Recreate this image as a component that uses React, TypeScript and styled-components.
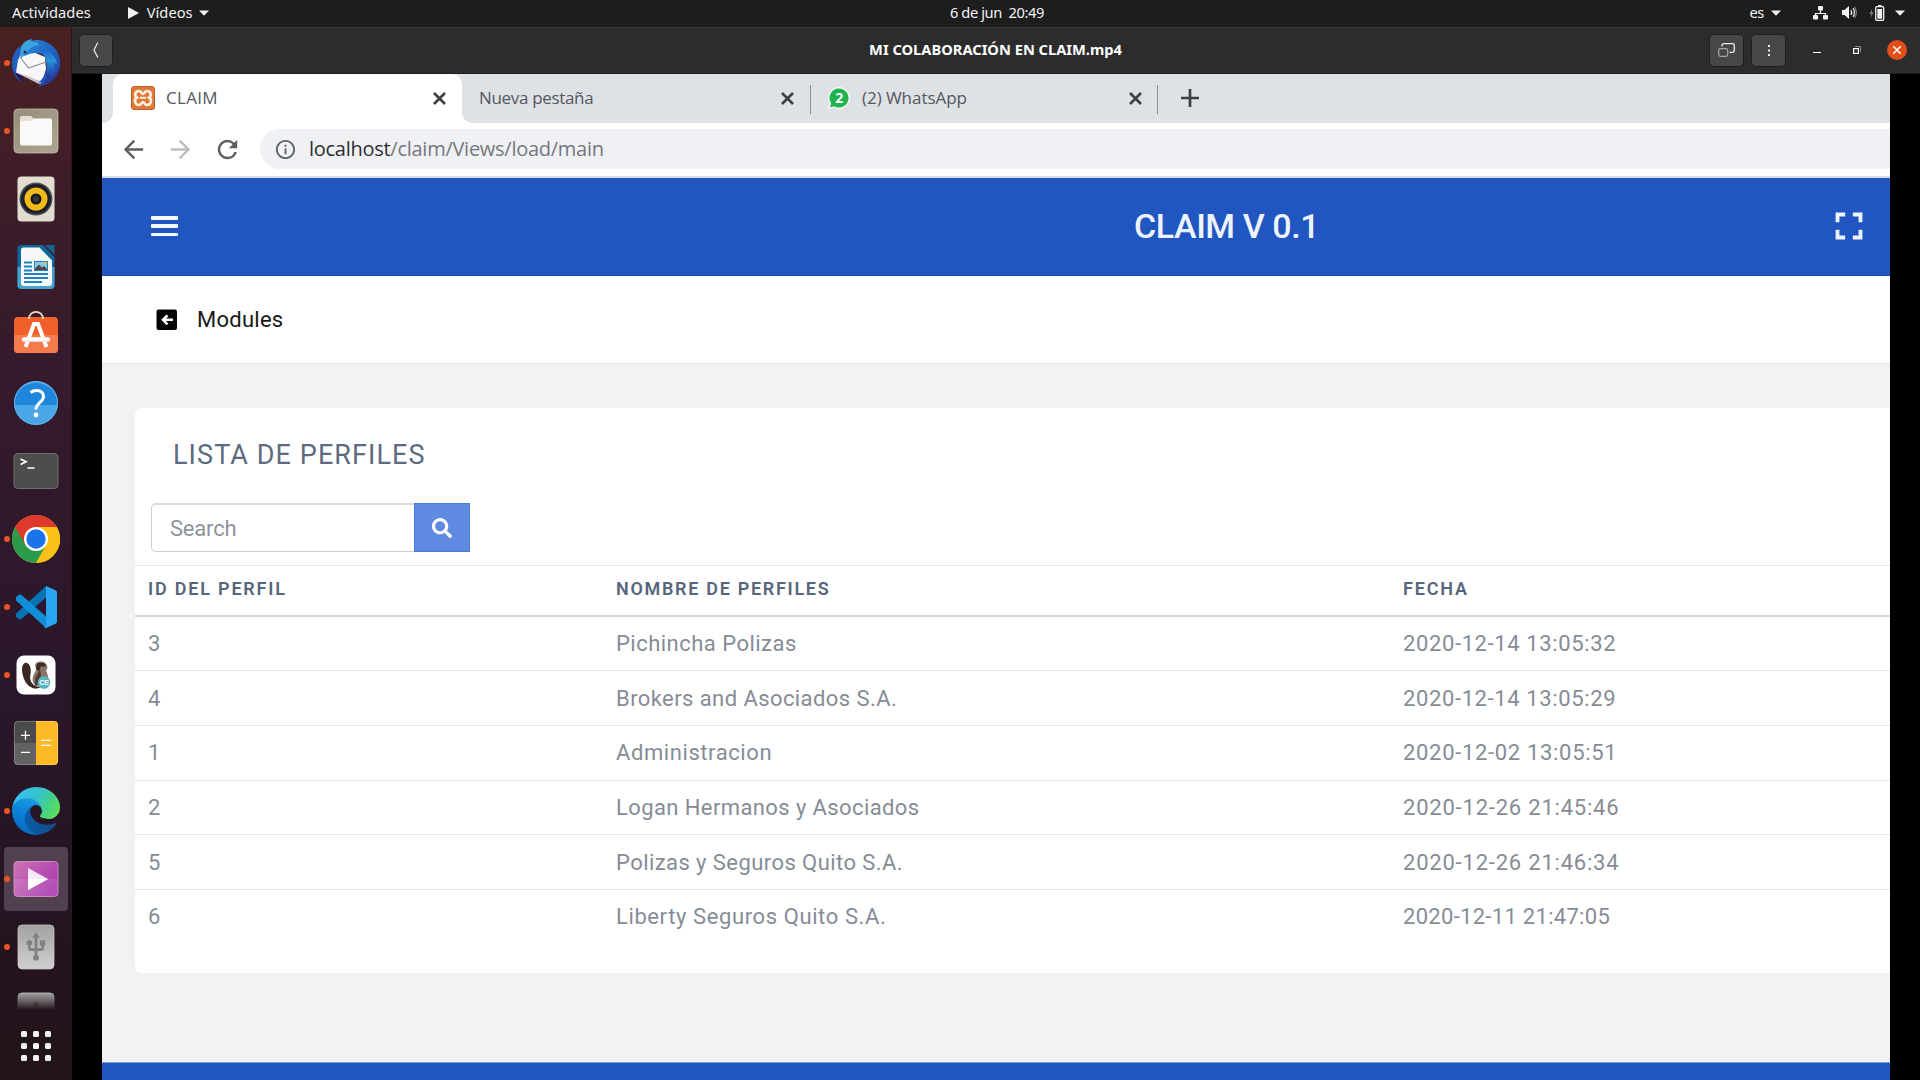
import React from "react";
import styled, { createGlobalStyle } from "styled-components";
import { MdArrowBack, MdArrowForward, MdFullscreen, MdInfoOutline, MdRefresh, MdUsb } from "react-icons/md";
import { FaSearch } from "react-icons/fa";

const GlobalStyle = createGlobalStyle`
  * { box-sizing: border-box; }
  body { margin: 0; background: #000; overflow: hidden; }
  svg { display: block; flex: none; }
`;

const uiFont = `"Noto Sans", "Open Sans", sans-serif`;
const tabFont = `"Open Sans", "Noto Sans", sans-serif`;
const pageFont = `Roboto, "Liberation Sans", sans-serif`;

const Desktop = styled.div`
  width: 1920px;
  height: 1080px;
  display: flex;
  flex-direction: column;
  background: #000;
  font-family: ${uiFont};
  white-space: pre;
`;

/* ---------- system bar ---------- */

const SystemBar = styled.header`
  height: 27px;
  flex: none;
  display: grid;
  grid-template-columns: 1fr auto 1fr;
  align-items: center;
  padding: 0 15px 2px 12px;
  background: #1d1d1d;
  color: #f2f2f2;
  font-size: 14.67px;
  line-height: 25px;
`;

const BarLeft = styled.div`
  display: flex;
  align-items: center;
`;

const BarLabel = styled.span<{ $tracking?: number; $left?: number; $right?: number }>`
  letter-spacing: ${(p) => p.$tracking ?? 0}px;
  margin-left: ${(p) => p.$left ?? 0}px;
  margin-right: ${(p) => p.$right ?? 0}px;
`;

const Clock = styled.time`
  padding-left: 77px;
  letter-spacing: -0.42px;
`;

const BarRight = styled.div`
  display: flex;
  align-items: center;
  justify-content: flex-end;
`;

const TrayIcon = styled.span<{ $left: number }>`
  margin-left: ${(p) => p.$left}px;
`;

const Caret = () => (
  <svg width="10" height="6" viewBox="0 0 10 6">
    <path d="M0 .4h10L5 5.8z" fill="#f2f2f2" />
  </svg>
);

/* ---------- workspace ---------- */

const Workspace = styled.div`
  flex: 1;
  min-height: 0;
  display: flex;
`;

const Dock = styled.nav`
  width: 72px;
  flex: none;
  display: flex;
  flex-direction: column;
  gap: 4px;
  padding: 4px 4px 0;
  overflow: hidden;
  background: linear-gradient(180deg, #4a2122 0%, #3f1d29 14%, #341a2c 34%, #2b172b 60%, #24131f 88%, #211419 100%);
  border-right: 1px solid #2a1420;
`;

const DockSlot = styled.div<{ $active?: boolean; $running?: boolean; $cut?: boolean }>`
  width: 64px;
  height: ${(p) => (p.$cut ? 27 : 64)}px;
  flex: none;
  position: relative;
  display: flex;
  justify-content: center;
  align-items: ${(p) => (p.$cut ? "flex-start" : "center")};
  padding-top: ${(p) => (p.$cut ? 8 : 0)}px;
  overflow: hidden;
  border-radius: 4px;
  background: ${(p) => (p.$active ? "#51414f" : "transparent")};
  ${(p) => p.$cut && "mask-image: linear-gradient(180deg, #000 35%, transparent 100%);"}

  &::before {
    content: "";
    display: ${(p) => (p.$running ? "block" : "none")};
    position: absolute;
    left: 0;
    top: 29px;
    width: 6px;
    height: 6px;
    border-radius: 50%;
    background: #e95420;
  }
`;

const AppGrid = styled.div`
  display: grid;
  grid-template-columns: repeat(3, 6px);
  grid-auto-rows: 6px;
  gap: 6px;
  justify-content: center;
  margin-top: 17px;
`;

const AppDot = styled.i`
  border-radius: 1.5px;
  background: #f4f2f3;
`;

/* ---------- player window ---------- */

const PlayerWindow = styled.main`
  flex: 1;
  min-width: 0;
  display: flex;
  flex-direction: column;
`;

const TitleBar = styled.div`
  height: 47px;
  flex: none;
  display: grid;
  grid-template-columns: 1fr auto 1fr;
  align-items: center;
  padding: 0 13px 1px 7px;
  background: #2c2c2c;
  border-top: 1px solid #3b3b3b;
  border-bottom: 1px solid #1f1f1f;
`;

const WindowTitle = styled.h1`
  margin: 0;
  padding: 0 0 2px 5px;
  font-size: 14.67px;
  line-height: 20px;
  font-weight: 700;
  color: #fff;
`;

const HeaderButton = styled.button<{ $width: number }>`
  width: ${(p) => p.$width}px;
  height: 33px;
  padding: 0;
  display: flex;
  align-items: center;
  justify-content: center;
  border: 1px solid #1f1f1f;
  border-radius: 5px;
  background: #474747;
`;

const WindowControls = styled.div`
  display: flex;
  align-items: center;
  justify-content: flex-end;
  gap: 7px;
`;

const ControlSlot = styled.span<{ $left: number }>`
  margin-left: ${(p) => p.$left}px;
`;

const VideoArea = styled.div`
  flex: 1;
  min-height: 0;
  display: flex;
  padding: 0 30px;
  background: #000;
`;

const Frame = styled.div`
  flex: 1;
  min-width: 0;
  display: flex;
  flex-direction: column;
  overflow: hidden;
  background: #f2f2f2;
`;

/* ---------- browser ---------- */

const TabStrip = styled.div`
  height: 49px;
  flex: none;
  display: flex;
  align-items: stretch;
  padding-left: 11px;
  background: #dee1e6;
  font-family: ${tabFont};
  font-size: 17px;
  color: #55585d;
`;

const Tab = styled.div<{ $width: number; $pad: number; $end: number; $active?: boolean }>`
  width: ${(p) => p.$width}px;
  flex: none;
  position: relative;
  display: flex;
  align-items: center;
  padding: 0 ${(p) => p.$end}px 1px ${(p) => p.$pad}px;
  border-radius: 10px 10px 0 0;
  background: ${(p) => (p.$active ? "#fff" : "transparent")};

  &::before,
  &::after {
    content: "";
    display: ${(p) => (p.$active ? "block" : "none")};
    position: absolute;
    bottom: 0;
    width: 10px;
    height: 10px;
  }
  &::before {
    right: 100%;
    background: radial-gradient(circle at 0 0, transparent 9.5px, #fff 10px);
  }
  &::after {
    left: 100%;
    background: radial-gradient(circle at 100% 0, transparent 9.5px, #fff 10px);
  }
`;

const TabLabel = styled.span<{ $gap: number; $tracking: number }>`
  flex: 1;
  margin-left: ${(p) => p.$gap}px;
  padding-bottom: 2px;
  letter-spacing: ${(p) => p.$tracking}px;
`;

const TabDivider = styled.i`
  width: 1px;
  height: 29px;
  flex: none;
  margin-top: 11px;
  background: #8a8d91;
`;

const NewTab = styled.span`
  display: flex;
  align-items: center;
  margin-left: 23px;
  padding-bottom: 1px;
`;

const AddressRow = styled.div`
  height: 55px;
  flex: none;
  display: flex;
  align-items: flex-start;
  padding: 6px 0 0 17px;
  background: #fff;
  border-bottom: 2px solid #dcdfe8;
`;

const NavIcon = styled.span<{ $right: number; $faint?: boolean }>`
  height: 41px;
  display: flex;
  align-items: center;
  margin-right: ${(p) => p.$right}px;
  color: ${(p) => (p.$faint ? "#bbbdc0" : "#5b5e63")};
`;

const Omnibox = styled.div`
  flex: 1;
  height: 40px;
  display: flex;
  align-items: center;
  gap: 12px;
  padding: 0 0 0 14px;
  border-radius: 20px 0 0 20px;
  background: #f0f1f5;
  color: #5f6368;
`;

const Address = styled.span`
  padding-bottom: 1px;
  font-family: ${tabFont};
  font-size: 20px;
  letter-spacing: -0.27px;
  color: #75787c;
`;

const Host = styled.b`
  font-weight: 400;
  color: #2c2e31;
`;

/* ---------- claim page ---------- */

const AppHeader = styled.div`
  height: 98px;
  flex: none;
  display: flex;
  align-items: center;
  padding: 0 18px 1px 49px;
  background: #2156c1;
  border-bottom: 1px solid #1d48a6;
  color: #eef4ff;
`;

const AppTitle = styled.h2`
  margin: 0 auto 0 956px;
  font: 500 34px/40px ${pageFont};
  letter-spacing: -0.42px;
`;

const MenuBars = styled.div`
  width: 27px;
  height: 20px;
  flex: none;
  display: flex;
  flex-direction: column;
  justify-content: space-between;
`;

const MenuBar = styled.i`
  height: 3.5px;
  border-radius: 1px;
  background: #f4f8ff;
`;

const Breadcrumb = styled.div`
  height: 88px;
  flex: none;
  display: flex;
  align-items: center;
  gap: 19px;
  padding: 0 0 0 54px;
  background: #fff;
  border-bottom: 1px solid #e6e8ea;
  font: 400 22px/30px ${pageFont};
  letter-spacing: 0.25px;
  color: #181818;
`;

const PageBody = styled.div`
  flex: 1;
  padding: 44px 0 0 33px;
`;

const Card = styled.section`
  height: 565px;
  display: flex;
  flex-direction: column;
  border-radius: 6px 0 0 6px;
  background: #fff;
  font-family: ${pageFont};
`;

const CardTitle = styled.h3`
  margin: 0;
  padding: 31px 0 0 38px;
  font-weight: 400;
  font-size: 27px;
  line-height: 32px;
  letter-spacing: 1.08px;
  color: #5d6b80;
`;

const SearchGroup = styled.div`
  display: flex;
  height: 49px;
  margin: 32px 0 13px 16px;
`;

const SearchField = styled.div`
  width: 263px;
  display: flex;
  align-items: center;
  padding-left: 18px;
  border: 1px solid #ccced1;
  border-top-width: 2px;
  border-top-color: #dadbdd;
  border-right: 0;
  border-radius: 5px 0 0 5px;
  font-size: 22px;
  letter-spacing: -0.2px;
  color: #8e949c;
`;

const SearchButton = styled.button`
  width: 56px;
  padding: 0;
  display: flex;
  align-items: center;
  justify-content: center;
  border: 1px solid #4b7ad8;
  background: #5e8ae2;
  color: #fff;
`;

const Row = styled.div<{ $head?: boolean; $first?: boolean }>`
  height: ${(p) => (p.$head ? 49.5 : p.$first ? 55.7 : 54.7)}px;
  flex: none;
  display: grid;
  grid-template-columns: 468px 787px 1fr;
  align-items: center;
  padding: 0 0 ${(p) => (p.$head ? 3 : 0)}px 13px;
  border-top: ${(p) => (p.$first ? "2px solid #d6d9dc" : "1px solid #e4e6e9")};
  font-size: ${(p) => (p.$head ? 18 : 22)}px;
  font-weight: ${(p) => (p.$head ? 600 : 400)};
  color: ${(p) => (p.$head ? "#56667c" : "#868c96")};
`;

const Cell = styled.span<{ $tracking?: number }>`
  letter-spacing: ${(p) => p.$tracking ?? 0}px;
`;

const Footer = styled.div`
  height: 18px;
  flex: none;
  background: #2156c1;
  border-top: 1px solid #7d9dda;
`;

/* ---------- drawings ---------- */

const Ico = ({ children }: { children: React.ReactNode }) => (
  <svg width="48" height="48" viewBox="0 0 48 48">{children}</svg>
);

const Thunderbird = () => (
  <Ico>
    <defs>
      <linearGradient id="tbBody" x1="0" y1="0" x2="1" y2="1">
        <stop offset="0" stopColor="#2f8fe0" /><stop offset=".5" stopColor="#1d63c4" /><stop offset="1" stopColor="#2b3fa5" />
      </linearGradient>
      <linearGradient id="tbWing" x1="0" y1="0" x2="0" y2="1">
        <stop offset="0" stopColor="#1f66c6" /><stop offset=".45" stopColor="#2b93dc" /><stop offset="1" stopColor="#1c3f9e" />
      </linearGradient>
    </defs>
    <path d="M8 7C1 13-1 21 .5 29c1 6 4 11 10 14.500L8 34z" fill="#1f5fc0" />
    <path d="M3 33c2 5 5 9 9 10.500l-3-8z" fill="#241457" />
    <path d="M9 15 20 12.500 33 18l1 12-4 13.500-1.500 1L4 33.500 6 21z" fill="#f7f7fa" />
    <path d="M4 33.500l9 2.500 15 6 1 2.500-2 .500z" fill="#c9c5ce" />
    <path d="M8 18l8.500 11L34 23" fill="none" stroke="#8c8c96" strokeWidth="1.100" />
    <path d="M9 7C15 1 25-.500 33 2.500c10 4 15 12 15 21.500 0 12-9 22-22 23.500 2-1.500 3-3 3-4.500l-3 1c5-4 8-9 8.500-15 .500-7-1-12-5-14-5-2-11-1-14.500 1L9 18z" fill="url(#tbBody)" />
    <path d="M34.500 31c1 6-1 12-6 16 10-2 17-8 19-18-3 5-6 7-9 8z" fill="#283c9e" />
    <path d="M30 9c9 3 14 9 15 16l-3-1 .500 8-4-2-1 7.500-3.500-1c2-7 1-14-1-18-1-4-2-7-3-9.500z" fill="url(#tbWing)" />
    <path d="M10 6.500c2-4 6-6.500 10.500-6l-2.500 2c5-.500 8 1 9 4-4-.500-7 1-10 4l-8 9c-1-5-1.500-9 1-13z" fill="#3aa3df" />
    <circle cx="13" cy="13" r="1.500" fill="#0e2c5c" />
  </Ico>
);

const Files = () => (
  <Ico>
    <defs>
      <linearGradient id="filesBg" x1="0" y1="0" x2="1" y2="1">
        <stop offset="0" stopColor="#958d79" /><stop offset="1" stopColor="#aea692" />
      </linearGradient>
    </defs>
    <rect x="2" y="2" width="44" height="44" rx="4" fill="url(#filesBg)" stroke="#c3bdac" strokeWidth=".8" />
    <path d="M8 13V11q0-2 2-2h8q2 0 3 2l1.500 2H38v8H8z" fill="#e5e0d3" />
    <path d="M8 16q0-2 2-2h9l3-2.500h16q2 0 2 2V36q0 2.500-2.500 2.500h-27Q8 38.500 8 36z" fill="#faf9f8" />
  </Ico>
);

const Rhythmbox = () => (
  <Ico>
    <rect x="5.500" y="1.500" width="37" height="45" rx="4" fill="#e2ddd1" />
    <circle cx="24" cy="24" r="16.500" fill="#4b5058" />
    <circle cx="24" cy="24" r="15" fill="#1d1e2b" />
    <circle cx="24" cy="24" r="11.500" fill="#f0bb16" />
    <circle cx="24" cy="24" r="5.500" fill="#16171c" />
    <circle cx="24" cy="24" r="3" fill="#34363c" />
  </Ico>
);

const Writer = () => (
  <Ico>
    <path d="M9.500 2H31l11.500 12v28q0 4-4 4h-29q-4 0-4-4V6q0-4 4-4z" fill="#0d6899" />
    <path d="M5.500 24h37v18q0 4-4 4h-29q-4 0-4-4z" fill="#47a2cf" />
    <path d="M33 2h9.500v10z" fill="#10648f" />
    <path d="M11 4.500h16.500L40 17.500V40q0 3-3 3H12q-3 0-3-3V7q0-2.500 2-2.500z" fill="#f8f8f8" />
    <path d="M12 19.500h8M12 23.500h8M12 27.500h8M12 31h24M12 35h24M12 39h18" stroke="#1c82bd" strokeWidth="1.800" />
    <rect x="22.500" y="18.500" width="13" height="9" fill="#8cc8ea" stroke="#1c82bd" strokeWidth="1" />
    <path d="M23 27v-1.500l4-4 3 3 2-1.500 3 3v1z" fill="#4a4a4a" />
    <path d="M32 19h3v3z" fill="#fdbc2c" />
  </Ico>
);

const Software = () => (
  <Ico>
    <rect x="2" y="6" width="44" height="36" rx="4" fill="#f15f2a" />
    <path d="M2 24h44v14q0 4-4 4H6q-4 0-4-4z" fill="#f47b4b" />
    <path d="M17 8C17-1.500 31-1.500 31 8" fill="none" stroke="#f5dcb4" strokeWidth="1.700" />
    <path d="M13.500 36 22 13h4l8.500 23" fill="none" stroke="#fff" strokeWidth="4" />
    <path d="M12 28.500h24" stroke="#fff" strokeWidth="4.500" strokeLinecap="round" />
    <path d="M12.500 30h9M26.500 30h9" stroke="#fbd3c1" strokeWidth="1" />
  </Ico>
);

const Help = () => (
  <Ico>
    <circle cx="24" cy="24" r="22" fill="#4aa6e7" />
    <path d="M2 26a22 22 0 1 1 44 0z" fill="#1e87dc" />
    <circle cx="24" cy="24" r="21.500" fill="none" stroke="#6cb8ec" strokeWidth=".8" />
    <path d="M18.500 13.500q2.500-2 6-2c4.500 0 7 2.500 7 6 0 5.500-7.500 6.500-7.500 13" fill="none" stroke="#fff" strokeWidth="3" />
    <circle cx="24" cy="36" r="2.400" fill="#fff" />
  </Ico>
);

const Terminal = () => (
  <Ico>
    <rect x="2" y="6.500" width="44" height="35" rx="3.500" fill="#4d4d4d" stroke="#6e6e6e" strokeWidth="1" />
    <path d="M8.500 12l5.500 2.700-5.500 2.700M15.500 21h7" fill="none" stroke="#fff" strokeWidth="1.700" />
  </Ico>
);

const Chrome = () => (
  <Ico>
    <circle cx="24" cy="24" r="24" fill="#fbc116" />
    <path d="M24 24 3.200 12A24 24 0 0 0 24 48l10.400-18z" fill="#2c9a4b" />
    <path d="M3.200 12a24 24 0 0 1 41.600 0H24z" fill="#df382c" />
    <path d="M3.200 12 13.600 30 24 12z" fill="#df382c" />
    <path d="M24 12h20.800A24 24 0 0 1 24 48l10.400-18z" fill="#fbc116" />
    <circle cx="24" cy="24" r="12" fill="#fff" />
    <circle cx="24" cy="24" r="9.700" fill="#1a73e8" />
  </Ico>
);

const VSCode = () => (
  <Ico>
    <path d="M34 3 4 30.500v3.500l3.500 2.500q1 .500 2-.500L34 14.500z" fill="#0672b4" />
    <path d="M34 45 4 17.500V14l3.500-2.500q1-.500 2 .500L34 33.500z" fill="#108fd8" />
    <path d="M34 3l9.500 4.300Q45 8 45 9.500v29q0 1.500-1.500 2.200L34 45q-1 .400-1.500-.500L34 42z" fill="#28a6f3" />
  </Ico>
);

const DBeaver = () => (
  <Ico>
    <rect x="4.500" y="4.500" width="39" height="39" rx="7.500" fill="#fff" />
    <path d="M13 12c-3 1-3.500 6-2.500 11 1.500 7 5 12 10 14 3 1 6 .500 8-1-5 0-9-3-10-7s1-7 0-12c-.700-3.500-3-6-5.500-5z" fill="#3a2822" />
    <path d="M23 14c1-3 4-4 7-3.500 3 .500 4 2 5 4 .800 2 .500 4-1 4.500l2 6c1 4-1 8-4 10-3 1-7 1-9-1-3-3-3-7-1-11 1-2 2-3 2-5z" fill="#8a7467" />
    <path d="M25 13c3-2 7-1.500 9 1l-2 2-3-1-2 5-3-2z" fill="#3a2822" />
    <path d="M28 18l1 6-2 7-3 4c-2-3-1-8 1-11z" fill="#4d3930" />
    <circle cx="32" cy="31.500" r="6.300" fill="#58b5bf" />
    <text x="32" y="34" textAnchor="middle" fontFamily="Liberation Sans, sans-serif" fontSize="7" fontWeight="700" fill="#fff">CE</text>
  </Ico>
);

const Calculator = () => (
  <Ico>
    <path d="M24 2v44H6q-4 0-4-4V6q0-4 4-4z" fill="#4b4b4b" />
    <path d="M24 24v22H6q-4 0-4-4V24z" fill="#626262" />
    <path d="M24 2v44h18q4 0 4-4V6q0-4-4-4z" fill="#fdba24" />
    <rect x="2.400" y="2.400" width="43.200" height="43.200" rx="4" fill="none" stroke="#fff" strokeOpacity=".3" strokeWidth=".8" />
    <path d="M9 16.300h9M13.500 11.800v9M9 33.300h9M29 21.300h10M29 26.300h10" stroke="#fff" strokeWidth="1.300" />
  </Ico>
);

const Edge = () => (
  <svg width="48" height="48" viewBox="0 0 256 256">
    <defs>
      <linearGradient id="edDark" x1=".2" y1=".5" x2="1" y2=".5">
        <stop offset="0" stopColor="#0c59a4" /><stop offset="1" stopColor="#114a8b" />
      </linearGradient>
      <linearGradient id="edBlue" x1=".6" y1="0" x2=".3" y2="1">
        <stop offset="0" stopColor="#1b9de2" /><stop offset=".5" stopColor="#0a7fd8" /><stop offset="1" stopColor="#0667be" />
      </linearGradient>
      <linearGradient id="edGreen" x1="0" y1=".3" x2="1" y2=".7">
        <stop offset="0" stopColor="#35c1f1" /><stop offset=".45" stopColor="#35c3cf" /><stop offset=".75" stopColor="#45d182" /><stop offset="1" stopColor="#5fe05b" />
      </linearGradient>
    </defs>
    <path fill="url(#edDark)" d="M231 190.500c-3.400 1.800-6.900 3.400-10.500 4.700a101 101 0 0 1-35.600 6.400c-46.900 0-87.700-32.300-87.700-73.600.1-11.300 6.300-21.600 16.100-27.200C70.900 102.600 60 146.700 60 172.600c0 73 67.300 80.500 81.800 80.500 7.800 0 19.600-2.300 26.700-4.500l1.300-.4a128 128 0 0 0 66.500-52.700 4 4 0 0 0-5.300-5z" />
    <path fill="url(#edBlue)" d="M105.700 241.500a79.200 79.200 0 0 1-22.700-21.300 80.700 80.700 0 0 1 29.500-120c3.100-1.500 8.500-4.100 15.600-4 10.100.1 19.600 4.900 25.700 13 4 5.400 6.300 11.900 6.400 18.700 0-.2 24.500-79.600-80-79.600-43.900 0-80 41.600-80 78.200a130 130 0 0 0 12.100 56 128 128 0 0 0 156.400 67.100 75.500 75.500 0 0 1-62.800-8z" />
    <path fill="url(#edGreen)" d="M152.300 148.900c-.8 1-3.300 2.500-3.300 5.700 0 2.600 1.700 5.200 4.800 7.300 14.400 10.100 41.600 8.700 41.700 8.700 10.700 0 21.200-2.900 30.300-8.300A61.400 61.400 0 0 0 256 109.400c.3-22.400-8-37.300-11.300-43.900C223.500 23.900 177.700 0 128 0A128 128 0 0 0 0 126.200c.5-36.500 36.800-66 80-66 3.500 0 23.500.3 42 10.100a72.600 72.600 0 0 1 30.900 29.300c6.100 10.600 7.200 24.100 7.200 29.500s-2.700 13.300-7.800 19.900z" />
  </svg>
);

const Videos = () => (
  <Ico>
    <defs>
      <linearGradient id="vidBg" x1="0" y1="0" x2="1" y2=".6">
        <stop offset="0" stopColor="#cd74b8" /><stop offset="1" stopColor="#ab3cae" />
      </linearGradient>
    </defs>
    <rect x="2" y="6.500" width="44" height="35" rx="3.500" fill="url(#vidBg)" stroke="#de9bd0" strokeWidth=".8" />
    <path d="M2.400 24h43.200v14q0 3-3 3H5.400q-3 0-3-3z" fill="#fff" fillOpacity=".1" />
    <path d="M16 13v22l20-11z" fill="#f7e8f5" />
    <path d="M16 24v11l20-11z" fill="#fff" />
  </Ico>
);

const UsbDrive = () => (
  <Ico>
    <defs>
      <linearGradient id="usbBg" x1="0" y1="0" x2="0" y2="1">
        <stop offset="0" stopColor="#a2a2a2" /><stop offset="1" stopColor="#d0d0d0" />
      </linearGradient>
    </defs>
    <rect x="6" y="2" width="36" height="44" rx="4" fill="url(#usbBg)" stroke="#c4c4c4" strokeWidth=".8" />
    <MdUsb x={8} y={8} size={32} color="#818181" />
  </Ico>
);

const TabClose = () => (
  <svg width="13" height="13" viewBox="0 0 13 13">
    <path d="M1 1l11 11M12 1 1 12" stroke="#3c4043" strokeWidth="2.600" />
  </svg>
);

const ClaimFavicon = () => (
  <svg width="24" height="24" viewBox="0 0 24 24">
    <rect x=".5" y=".5" width="23" height="23" rx="2.500" fill="#e07a39" stroke="#bd5f27" />
    <path d="M8 5c-4 0-5 4.500-2 6.500-3.500 2-2 7.500 2 7.500 2.500 0 2.500-3 4-3s1.500 3 4 3c4 0 5.500-5.500 2-7.500C21 9.500 20 5 16 5c-2.500 0-2.500 3-4 3s-1.500-3-4-3z" fill="none" stroke="#fff2e4" strokeWidth="2.600" />
    <path d="M9 11.800h6" stroke="#fff2e4" strokeWidth="2" />
  </svg>
);

const WhatsAppFavicon = () => (
  <svg width="24" height="24" viewBox="0 0 24 24">
    <path d="M12 1a11 11 0 1 1-5 20.800L.800 23l1.700-5.500A11 11 0 0 1 12 1z" fill="#effaf1" />
    <path d="M12 2.500a9.500 9.500 0 1 1-4.800 17.700L3 21.300l1.200-4A9.500 9.500 0 0 1 12 2.500z" fill="#20b24c" />
    <text x="12.300" y="17.200" textAnchor="middle" fontFamily="Open Sans, sans-serif" fontSize="14" fontWeight="700" fill="#fff">2</text>
  </svg>
);

const BackSquare = () => (
  <svg width="22" height="22" viewBox="0 0 22 22">
    <rect x=".5" y=".5" width="20.500" height="20.500" rx="2" fill="#050505" />
    <path d="M17 10.800H7.500M11.500 6.300l-4.500 4.500 4.500 4.500" fill="none" stroke="#fff" strokeWidth="2.600" />
  </svg>
);

const dockItems: { icon: React.ReactNode; running?: boolean; active?: boolean; cut?: boolean }[] = [
  { icon: <Thunderbird />, running: true },
  { icon: <Files />, running: true },
  { icon: <Rhythmbox /> },
  { icon: <Writer /> },
  { icon: <Software /> },
  { icon: <Help /> },
  { icon: <Terminal /> },
  { icon: <Chrome />, running: true },
  { icon: <VSCode />, running: true },
  { icon: <DBeaver />, running: true },
  { icon: <Calculator /> },
  { icon: <Edge />, running: true },
  { icon: <Videos />, running: true, active: true },
  { icon: <UsbDrive />, running: true },
  { icon: <UsbDrive />, cut: true },
];

const profiles = [
  { id: 3, name: "Pichincha Polizas", track: 0.48, date: "2020-12-14 13:05:32", dateTrack: 0.62 },
  { id: 4, name: "Brokers and Asociados S.A.", track: 0.42, date: "2020-12-14 13:05:29", dateTrack: 0.62 },
  { id: 1, name: "Administracion", track: 0.58, date: "2020-12-02 13:05:51", dateTrack: 0.68 },
  { id: 2, name: "Logan Hermanos y Asociados", track: 0.4, date: "2020-12-26 21:45:46", dateTrack: 0.79 },
  { id: 5, name: "Polizas y Seguros Quito S.A.", track: 0.43, date: "2020-12-26 21:46:34", dateTrack: 0.79 },
  { id: 6, name: "Liberty Seguros Quito S.A.", track: 0.6, date: "2020-12-11 21:47:05", dateTrack: 0.3 },
];

export default function App() {
  return (
    <Desktop>
      <GlobalStyle />
      <SystemBar>
        <BarLeft>
          <BarLabel $tracking={0.05} $right={37}>Actividades</BarLabel>
          <svg width="11" height="12" viewBox="0 0 11 12"><path d="M0 0v12l11-6z" fill="#f2f2f2" /></svg>
          <BarLabel $left={8} $right={6}>Vídeos</BarLabel>
          <Caret />
        </BarLeft>
        <Clock>6 de jun  20:49</Clock>
        <BarRight>
          <BarLabel $tracking={-0.4} $right={7}>es</BarLabel>
          <Caret />
          <TrayIcon $left={32}>
            <svg width="15" height="14" viewBox="0 0 15 14">
              <path d="M7.500 4v4M2.500 10V7.500h10V10" fill="none" stroke="#f2f2f2" strokeWidth="1.200" />
              <rect x="5" y="0" width="5" height="4.500" rx="1" fill="#f2f2f2" />
              <rect x="0" y="9" width="5" height="4.500" rx="1" fill="#f2f2f2" />
              <rect x="10" y="9" width="5" height="4.500" rx="1" fill="#f2f2f2" />
            </svg>
          </TrayIcon>
          <TrayIcon $left={14}>
            <svg width="15" height="13" viewBox="0 0 15 13">
              <path d="M0 4h2.500L7 0v13L2.500 9H0z" fill="#f2f2f2" />
              <path d="M9 4q1.500 2.500 0 5M11 2.200q3 4.300 0 8.600" fill="none" stroke="#f2f2f2" strokeWidth="1.200" />
              <path d="M12.800 1q3 5.500 0 11" fill="none" stroke="#8b8b8b" strokeWidth="1.100" />
            </svg>
          </TrayIcon>
          <TrayIcon $left={12}>
            <svg width="16" height="16" viewBox="0 0 16 16">
              <path d="M3.500 3 .500 9h2L1.500 13 4.500 7.500h-2z" fill="#8b8b8b" />
              <rect x="6.700" y="1.700" width="8" height="13.600" rx="1" fill="none" stroke="#f2f2f2" strokeWidth="1.300" />
              <path d="M9 0h3.500v2H9zM8.300 4h4.800v9.800H8.300z" fill="#f2f2f2" />
            </svg>
          </TrayIcon>
          <TrayIcon $left={10}><Caret /></TrayIcon>
        </BarRight>
      </SystemBar>

      <Workspace>
        <Dock>
          {dockItems.map((item, i) => (
            <DockSlot key={i} $running={item.running} $active={item.active} $cut={item.cut}>{item.icon}</DockSlot>
          ))}
          <AppGrid>{Array.from({ length: 9 }, (_, i) => <AppDot key={i} />)}</AppGrid>
        </Dock>

        <PlayerWindow>
          <TitleBar>
            <HeaderButton $width={34}>
              <svg width="6" height="16" viewBox="0 0 6 16"><path d="M4.800.500 1 8l3.800 7.500" fill="none" stroke="#eee" strokeWidth="1.200" /></svg>
            </HeaderButton>
            <WindowTitle>MI COLABORACIÓN EN CLAIM.mp4</WindowTitle>
            <WindowControls>
              <HeaderButton $width={35}>
                <svg width="17" height="14" viewBox="0 0 17 14">
                  <path d="M4 3.500V2.500q0-1.800 1.800-1.800h8.700q1.800 0 1.800 1.800v5q0 1.800-1.800 1.800H11.500" fill="none" stroke="#eee" strokeWidth="1.300" />
                  <rect x=".700" y="5.700" width="9" height="7.600" rx="1.800" fill="none" stroke="#a5a5a5" strokeWidth="1.200" />
                </svg>
              </HeaderButton>
              <HeaderButton $width={35}>
                <svg width="2" height="11" viewBox="0 0 2 11"><path d="M0 0h2v2H0zM0 4.500h2v2H0zM0 9h2v2H0z" fill="#eee" /></svg>
              </HeaderButton>
              <ControlSlot $left={20}>
                <svg width="8" height="5" viewBox="0 0 8 5"><path d="M0 4.500h8" stroke="#fff" strokeWidth="1" /></svg>
              </ControlSlot>
              <ControlSlot $left={25}>
                <svg width="8" height="8" viewBox="0 0 8 8">
                  <path d="M2 .500h5.500V6" fill="none" stroke="#8d8d8d" />
                  <rect x=".600" y="2.600" width="4.800" height="4.800" fill="none" stroke="#fff" strokeWidth="1.200" />
                </svg>
              </ControlSlot>
              <ControlSlot $left={19}>
                <svg width="20" height="20" viewBox="0 0 20 20">
                  <circle cx="10" cy="10" r="10" fill="#e04e1a" />
                  <path d="M6.300 6.300l7.400 7.400M13.700 6.300l-7.400 7.400" stroke="#fff" strokeWidth="1.500" />
                </svg>
              </ControlSlot>
            </WindowControls>
          </TitleBar>

          <VideoArea>
            <Frame>
              <TabStrip>
                <Tab $width={349} $pad={18} $end={16} $active>
                  <ClaimFavicon />
                  <TabLabel $gap={11} $tracking={0.3}>CLAIM</TabLabel>
                  <TabClose />
                </Tab>
                <Tab $width={348} $pad={17} $end={16}>
                  <TabLabel $gap={0} $tracking={-0.33}>Nueva pestaña</TabLabel>
                  <TabClose />
                </Tab>
                <TabDivider />
                <Tab $width={346} $pad={16} $end={15}>
                  <WhatsAppFavicon />
                  <TabLabel $gap={11} $tracking={-0.05}>(2) WhatsApp</TabLabel>
                  <TabClose />
                </Tab>
                <TabDivider />
                <NewTab>
                  <svg width="18" height="18" viewBox="0 0 18 18"><path d="M9 0v18M0 9h18" stroke="#3c4043" strokeWidth="2.700" /></svg>
                </NewTab>
              </TabStrip>
              <AddressRow>
                <NavIcon $right={18}><MdArrowBack size={29} /></NavIcon>
                <NavIcon $right={18} $faint><MdArrowForward size={29} /></NavIcon>
                <NavIcon $right={18}><MdRefresh size={29} /></NavIcon>
                <Omnibox>
                  <MdInfoOutline size={23} />
                  <Address><Host>localhost</Host>/claim/Views/load/main</Address>
                </Omnibox>
              </AddressRow>

              <AppHeader>
                <MenuBars><MenuBar /><MenuBar /><MenuBar /></MenuBars>
                <AppTitle>CLAIM V 0.1</AppTitle>
                <MdFullscreen size={46} />
              </AppHeader>
              <Breadcrumb>
                <BackSquare />
                Modules
              </Breadcrumb>
              <PageBody>
                <Card>
                  <CardTitle>LISTA DE PERFILES</CardTitle>
                  <SearchGroup>
                    <SearchField>Search</SearchField>
                    <SearchButton><FaSearch size={20} /></SearchButton>
                  </SearchGroup>
                  <Row $head>
                    <Cell $tracking={1.8}>ID DEL PERFIL</Cell>
                    <Cell $tracking={1.7}>NOMBRE DE PERFILES</Cell>
                    <Cell $tracking={1.85}>FECHA</Cell>
                  </Row>
                  {profiles.map((p, i) => (
                    <Row key={p.id} $first={i === 0}>
                      <Cell>{p.id}</Cell>
                      <Cell $tracking={p.track}>{p.name}</Cell>
                      <Cell $tracking={p.dateTrack}>{p.date}</Cell>
                    </Row>
                  ))}
                </Card>
              </PageBody>
              <Footer />
            </Frame>
          </VideoArea>
        </PlayerWindow>
      </Workspace>
    </Desktop>
  );
}
